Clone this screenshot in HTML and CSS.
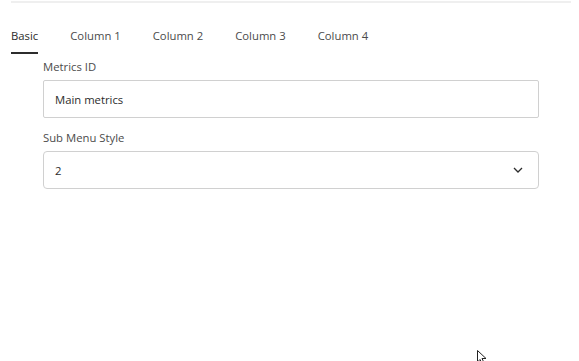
FILE: index.html
```html
<!DOCTYPE html>
<html lang="en">
<head>
	<meta charset="UTF-8">
	<meta name="viewport" content="width=device-width, initial-scale=1.0">
	<title>Menu Settings</title>
	<link rel="stylesheet" href="styles.css">
</head>
<body>
	<div class="topline"></div>
	<div class="tabs">
		<div class="tab active">Basic</div>
		<div class="tab">Column 1</div>
		<div class="tab">Column 2</div>
		<div class="tab">Column 3</div>
		<div class="tab">Column 4</div>
	</div>
	<div class="form">
		<label class="label" for="metricsId">Metrics ID</label>
		<input class="field" id="metricsId" type="text" value="Main metrics">
		<label class="label" for="subMenu">Sub Menu Style</label>
		<div class="select">
			<span>2</span>
			<svg class="chevron" width="10" height="6" viewBox="0 0 10 6"><path d="M1 1 L5 5 L9 1" fill="none" stroke="#2c2c2c" stroke-width="1.3"/></svg>
		</div>
	</div>
	<svg class="cursor" width="12" height="14" viewBox="0 0 12 14"><path d="M0.5 0.5 L0.5 12 L3 9.5 L5 13.5 L7 12.5 L5 8.5 L9 8.5 Z" fill="#fff" stroke="#222" stroke-width="1"/></svg>
</body>
</html>
```

FILE: styles.css
```css
body,
html {
	margin: 0;
	padding: 0;
}

body {
	background: #fff;
	font-family: "Open Sans", "Noto Sans", sans-serif;
	font-size: 11.3px;
	color: #2c2c2c;
	width: 579px;
	height: 361px;
	overflow: hidden;
	position: relative;
}

*,
*::after,
*::before {
	box-sizing: border-box;
}

.topline {
	margin: 1px 8px 0 11px;
	height: 2px;
	background: #efefef;
}

.tabs {
	display: flex;
	gap: 32px;
	padding-left: 11px;
}

.tab {
	padding: 25px 0 8px;
	line-height: 16px;
	color: #4b4b4b;
	border-bottom: 2px solid transparent;
}

.tab.active {
	color: #2c2c2c;
	border-bottom-color: #2c2c2c;
}

.form {
	margin-left: 43px;
	width: 496px;
	display: flex;
	flex-direction: column;
}

.label {
	line-height: 16px;
	margin: 5px 0 5px;
	color: #4b4b4b;
}

.label + .field {
	margin-bottom: 7px;
}

.field,
.select {
	height: 38px;
	border: 1px solid #d0d0d0;
	border-radius: 2px;
	padding: 0 11px;
	font: inherit;
	color: #2c2c2c;
	background: #fff;
	outline: none;
}

.select {
	display: flex;
	align-items: center;
	justify-content: space-between;
	border-radius: 4px;
	padding-right: 15px;
}

.cursor {
	position: absolute;
	left: 477px;
	top: 350px;
}
```
